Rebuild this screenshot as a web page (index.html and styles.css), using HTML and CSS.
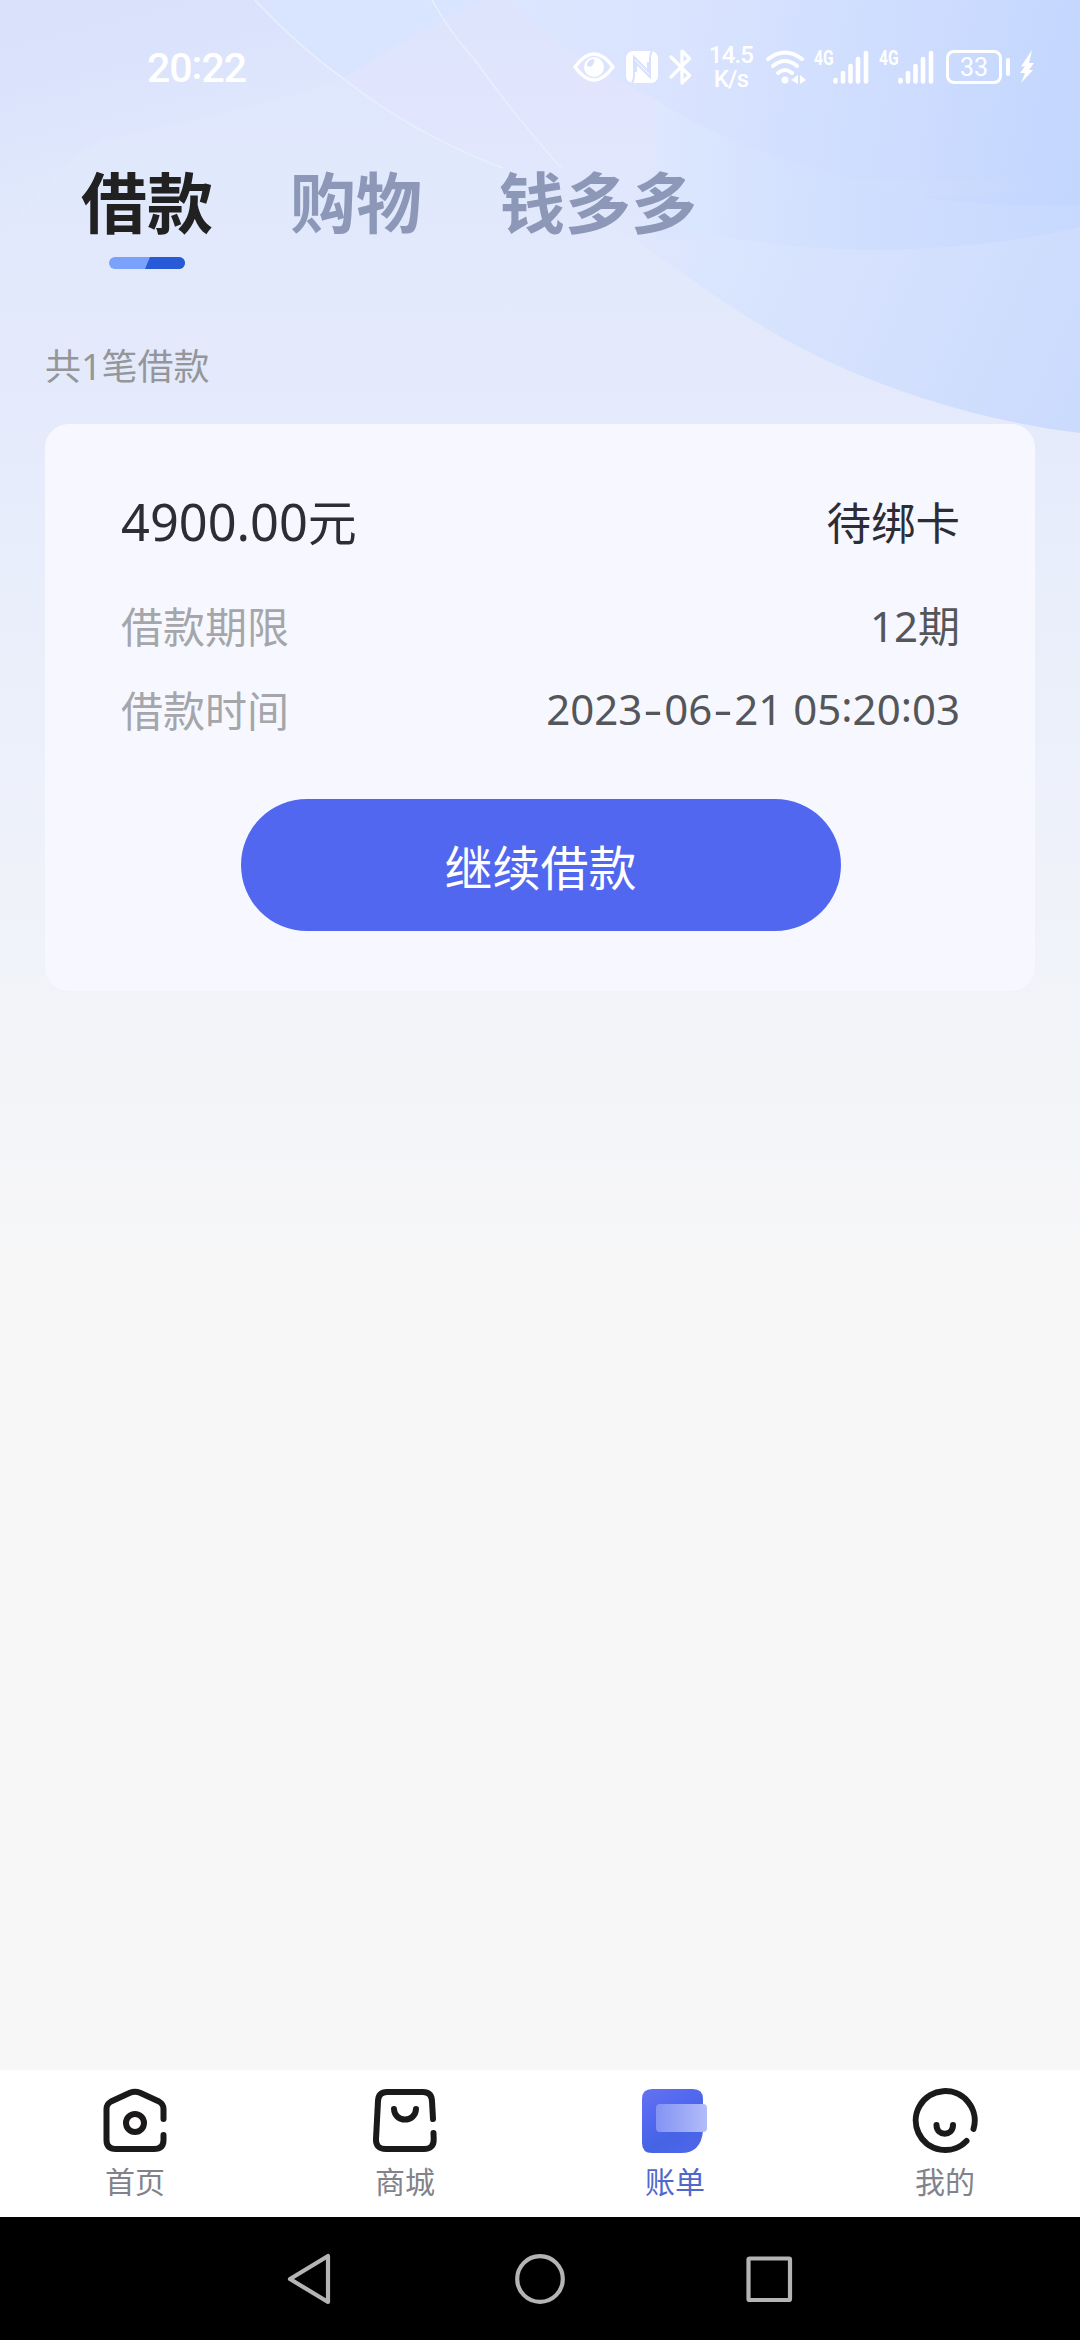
FILE: index.html
```html
<!DOCTYPE html>
<html lang="zh-CN">
<head>
<meta charset="utf-8">
<title>账单</title>
<link rel="stylesheet" href="styles.css">
</head>
<body>
<div class="screen">
  <svg class="backdrop" viewBox="0 0 1080 1300" width="1080" height="1300" aria-hidden="true">
    <defs>
      <linearGradient id="base" x1="0" y1="0" x2="0" y2="1">
        <stop offset="0" stop-color="#dfe6fc"/><stop offset=".12" stop-color="#e0e8fc"/>
        <stop offset=".3" stop-color="#e4eafb"/><stop offset=".45" stop-color="#e9eefb"/><stop offset=".75" stop-color="#f1f3f9"/><stop offset="1" stop-color="#f7f7f7"/>
      </linearGradient>
      <linearGradient id="wedge" gradientUnits="userSpaceOnUse" x1="0" y1="0" x2="60" y2="240">
        <stop offset="0" stop-color="#dae2fb"/><stop offset=".35" stop-color="#dbe3fc"/><stop offset="1" stop-color="#dfe7fd" stop-opacity="0"/>
      </linearGradient>
      <linearGradient id="top" gradientUnits="userSpaceOnUse" x1="510" y1="0" x2="1080" y2="60">
        <stop offset="0" stop-color="#dce6ff"/><stop offset=".45" stop-color="#d8e2fe"/><stop offset=".7" stop-color="#d2dffe"/><stop offset="1" stop-color="#c6d8ff"/>
      </linearGradient>
      <linearGradient id="disc" gradientUnits="userSpaceOnUse" x1="600" y1="190" x2="1080" y2="400">
        <stop offset="0" stop-color="#dee6fd" stop-opacity="0"/><stop offset=".25" stop-color="#dae5fe"/><stop offset=".55" stop-color="#d5e1fd"/><stop offset="1" stop-color="#cbdbfd"/>
      </linearGradient>
      <linearGradient id="disc2" gradientUnits="userSpaceOnUse" x1="656" y1="150" x2="1080" y2="170">
        <stop offset="0" stop-color="#dde7fe"/><stop offset=".5" stop-color="#cfdefe"/><stop offset="1" stop-color="#c7d9ff"/>
      </linearGradient>
      <linearGradient id="disc3" gradientUnits="userSpaceOnUse" x1="680" y1="60" x2="1080" y2="160">
        <stop offset="0" stop-color="#ccdcff" stop-opacity="0"/><stop offset=".6" stop-color="#cadafe" stop-opacity=".6"/><stop offset="1" stop-color="#c3d6fe"/>
      </linearGradient>
      <linearGradient id="lilac" x1="0" y1="0" x2="0" y2="1">
        <stop offset="0" stop-color="#dfe4fd"/><stop offset=".6" stop-color="#e1e6fd"/><stop offset="1" stop-color="#e1e7fc" stop-opacity="0"/>
      </linearGradient>
    </defs>
    <rect width="1080" height="1300" fill="url(#base)"/>
    <path d="M0 0H482Q390 50 344 78Q255 110 103 140Q50 165 0 240Z" fill="url(#wedge)"/>
    <path d="M255 0H482Q430 24 344 78Q295 42 255 0Z" fill="#d8e4fe" opacity=".8"/>
    <path d="M482 0Q430 24 344 78Q420 135 503 168Q560 215 636 240L656 200V99Q570 60 510 0Z" fill="url(#lilac)"/>
    <path d="M510 0H1080V240H656V99Q570 60 510 0Z" fill="url(#top)"/>
    <path d="M600 215L636 240Q664 262 695 282Q727 305 760 325Q797 347 836 365Q876 383 919 397Q998 423 1080 433V180H656Z" fill="url(#disc)"/>
    <path d="M656 99Q690 123 726 137Q780 160 833 173Q876 190 919 197L1080 190V227Q988 249 874 250Q765 250 656 222Z" fill="url(#disc2)"/>
    <path d="M656 99Q690 123 726 137Q780 160 833 173Q876 190 919 197Q1000 208 1080 205V0H656Z" fill="url(#disc3)"/>
    <path d="M255 0Q300 48 344 79Q413 134 503 168M432 0Q450 33 475 60Q510 110 561 168" fill="none" stroke="#e9effe" stroke-width="1.5"/>
  </svg>

  <div class="app">
    <header class="status">
      <span class="clock">20<i>:</i>22</span>
      <div class="indicators">
        <svg class="eye" width="42" height="30" viewBox="0 0 42 30"><path d="M2 15Q21-11 40 15Q21 41 2 15Z" fill="none" stroke="#fff" stroke-width="3.500" stroke-linejoin="round"/><circle cx="21" cy="15" r="10" fill="#fff"/><path d="M14 14Q20 17 21.500 8Q20 6 17 8Q14 10 14 14Z" fill="#d8e2fd"/></svg>
        <svg class="nfc" width="32" height="32" viewBox="0 0 32 32"><rect width="32" height="32" rx="7" fill="#fff"/><path d="M6 32Q8 29 8 25V6L22 20V11M26 0Q24 3 24 7V26L10 12V21" fill="none" stroke="#d8e2fd" stroke-width="2"/></svg>
        <svg class="bt" width="24" height="38" viewBox="0 0 24 38"><path d="M2 9 20.500 27.500 13 35V3L20.500 10.500 2 29" fill="none" stroke="#fff" stroke-width="3.200" stroke-linejoin="round" stroke-linecap="round"/></svg>
        <div class="speed"><span>14.5</span><span>K/s</span></div>
        <svg class="wifi" width="42" height="34" viewBox="0 0 42 34"><g fill="none" stroke="#fff" stroke-width="4" stroke-linecap="round"><path d="M3 9Q20-4 37 9M8 16Q20 6 32 16M13 23Q20 17 27 23"/></g><circle cx="20" cy="30" r="3.500" fill="#fff"/><path d="M33 25V34L26 30ZM35 25V34L41 30Z" fill="#fff"/></svg>
        <div class="cell"><span>4G</span><svg width="36" height="34" viewBox="0 0 36 34"><path d="M2.500 30V31.500M10 23V31.500M17.500 16V31.500M25 9V31.500M33 3V31.500" stroke="#fff" stroke-width="4.600" stroke-linecap="round"/></svg></div>
        <div class="cell"><span>4G</span><svg width="36" height="34" viewBox="0 0 36 34"><path d="M2.500 30V31.500M10 23V31.500M17.500 16V31.500M25 9V31.500M33 3V31.500" stroke="#fff" stroke-width="4.600" stroke-linecap="round"/></svg></div>
        <div class="battery">33</div>
        <div class="tip"></div>
        <svg class="bolt" width="14" height="33" viewBox="0 0 14 33"><path d="M12 0 1 16.500H5L0 23H5L1 33 13 20H9L14 13H9Z" fill="#fff"/></svg>
      </div>
    </header>

    <nav class="tabs">
      <div class="tab active">借款<svg width="76" height="12" viewBox="0 0 76 12"><rect width="76" height="12" rx="6" fill="#7ba2fa"/><path d="M41 0H70A6 6 0 0 1 70 12H36Z" fill="#265ad7"/></svg></div>
      <div class="tab">购物</div>
      <div class="tab">钱多多</div>
    </nav>

    <main class="content">
      <p class="summary">共<span class="num">1</span>笔借款</p>
      <section class="card">
        <div class="row head"><span class="amount"><span class="num">4900.00</span>元</span><span class="state">待绑卡</span></div>
        <div class="row"><span class="label">借款期限</span><span class="value"><span class="num">12</span>期</span></div>
        <div class="row"><span class="label">借款时间</span><span class="value num">2023<i class="dash">-</i>06<i class="dash">-</i>21 05<i>:</i>20<i>:</i>03</span></div>
        <button class="primary">继续借款</button>
      </section>
    </main>

    <nav class="tabbar">
      <a class="item"><svg width="66" height="66" viewBox="0 0 66 66"><g fill="none" stroke="#1b1919" stroke-width="6" stroke-linecap="round" stroke-linejoin="round"><path d="M61.500 31V21Q61.500 16 57 13.500L38 4.800Q33 2.800 28 4.800L9 13.500Q4.500 16 4.500 21V52Q4.500 61 14 61H52Q61.500 61 61.500 52V47"/><circle cx="33" cy="35" r="9"/></g></svg>首页</a>
      <a class="item"><svg width="66" height="66" viewBox="0 0 66 66"><g fill="none" stroke="#1b1919" stroke-width="6" stroke-linecap="round" stroke-linejoin="round"><path d="M61 31 60 13Q59.500 4 51 4H15Q6.500 4 6 13L4 51Q3.500 61 14 61H52Q62 61 61.700 51L61.500 45M22 21C22.500 35 43.500 35 44 21"/></g></svg>商城</a>
      <a class="item current"><svg width="66" height="66" viewBox="0 0 66 66"><defs><linearGradient id="bill" x1=".1" y1="0" x2=".7" y2="1"><stop offset="0" stop-color="#6272ee"/><stop offset=".35" stop-color="#5468f0"/><stop offset=".7" stop-color="#4564e4"/><stop offset="1" stop-color="#4e66ea"/></linearGradient><linearGradient id="pane" x1="0" x2="1"><stop offset="0" stop-color="#8393f3"/><stop offset="1" stop-color="#b2bcfa"/></linearGradient></defs><path d="M10 1H51Q61 1 61 11V43Q59 65 39 65H10Q0 65 0 55V11Q0 1 10 1Z" fill="url(#bill)"/><rect x="14" y="16" width="51" height="28" rx="4" fill="url(#pane)"/></svg>账单</a>
      <a class="item"><svg width="66" height="66" viewBox="0 0 66 66"><g fill="none" stroke="#1b1919" stroke-width="6" stroke-linecap="round"><path d="M61.500 41A29.500 29.500 0 1 0 54.500 53M24.500 37C24.500 48.500 41 48.500 41 37"/></g></svg>我的</a>
    </nav>

    <footer class="sysnav">
      <svg width="560" height="60" viewBox="0 0 560 60"><g fill="none" stroke="#b4b4b4" stroke-width="4.200" stroke-linejoin="round"><path d="M68 7V53L30 30Z"/><circle cx="280" cy="30" r="22.800"/><rect x="488.500" y="9.500" width="41.500" height="41.500" rx="1"/></g></svg>
    </footer>
  </div>
</div>
</body>
</html>
```
FILE: styles.css
```css
* { box-sizing: border-box; }
body {
  margin: 0;
  background: #f7f7f7;
  font-family: "Noto Sans CJK SC", sans-serif;
}
svg { display: block; flex: none; }
i { font-style: normal; }
.screen { display: grid; width: 1080px; height: 2340px; overflow: hidden; }
.backdrop, .app { grid-area: 1 / 1; }
.app { z-index: 1; display: flex; flex-direction: column; height: 2340px; }

.status {
  display: flex;
  justify-content: space-between;
  height: 134px;
  padding-left: 147px;
  padding-right: 46px;
  color: #fff;
  font-family: Roboto, sans-serif;
}
.clock { margin-top: 44px; font-size: 41px; line-height: 48px; font-weight: 500; letter-spacing: -1px; }
.clock i { display: inline-block; transform: translateY(-3px); }
.indicators { display: flex; align-items: center; height: 133px; }
.nfc { margin-left: 11px; }
.bt { margin-left: 11px; }
.speed {
  display: flex;
  flex-direction: column;
  align-items: center;
  width: 44px;
  margin-left: 16px;
  font-size: 24px;
  line-height: 24px;
  font-weight: 500;
  letter-spacing: -.8px;
}
.wifi { margin-left: 12px; }
.cell { display: flex; align-items: flex-start; margin-left: 7px; }
.cell + .cell { margin-left: 10px; }
.cell span {
  width: 19px;
  font: 700 20px/17px Roboto, sans-serif;
  transform: scaleX(.78);
  transform-origin: left;
}
.battery {
  width: 56px;
  height: 34px;
  margin-left: 12px;
  border: 3px solid #fff;
  border-radius: 8px;
  font-size: 25px;
  line-height: 29px;
  text-align: center;
}
.tip { width: 4px; height: 18px; margin-left: 4px; border-radius: 2px; background: #fff; }
.bolt { margin-left: 10px; }

.tabs { display: flex; height: 190px; padding: 25px 81px 0; gap: 77px; }
.tab {
  display: flex;
  flex-direction: column;
  align-items: center;
  gap: 18px;
  height: 110px;
  color: #8d98b8;
  font-size: 66px;
  line-height: 80px;
  font-weight: 700;
}
.tab.active { color: #212121; }

.content { flex: 1; padding: 0 45px; }
.summary { height: 100px; margin: 0; padding-top: 16px; color: #949699; font-size: 36px; line-height: 48px; font-weight: 400; }
.num { font-family: "Noto Sans", sans-serif; }
.num i { display: inline-block; transform: translateY(-3px); }
.num .dash { width: 22px; text-align: center; transform: scaleX(1.4); }
.card {
  display: flex;
  flex-direction: column;
  height: 567px;
  padding: 57px 75px 0 76px;
  border-radius: 24px;
  background: #f7f8ff;
}
.row { display: flex; align-items: center; justify-content: space-between; height: 84px; font-size: 42px; line-height: 60px; }
.head { height: 102px; padding-bottom: 22px; color: #2c2d35; }
.amount { font-size: 49px; }
.amount .num { font-size: 50.5px; }
.state { font-size: 44.5px; }
.label { color: #a5a6aa; }
.value { color: #55565a; }
.primary {
  align-self: center;
  width: 600px;
  height: 132px;
  margin-top: 48px;
  padding: 0;
  border: 0;
  border-radius: 66px;
  background: #5267f0;
  color: #fff;
  font: 400 48px/130px "Noto Sans CJK SC", sans-serif;
}

.tabbar { display: grid; grid-template-columns: repeat(4, 1fr); height: 147px; background: #fff; }
.item { display: flex; flex-direction: column; align-items: center; gap: 4px; padding-top: 18px; color: #81828b; font-size: 30px; line-height: 44px; }
.item.current { color: #5167cc; }
.sysnav { display: flex; justify-content: center; align-items: center; height: 123px; background: #000; }
```
